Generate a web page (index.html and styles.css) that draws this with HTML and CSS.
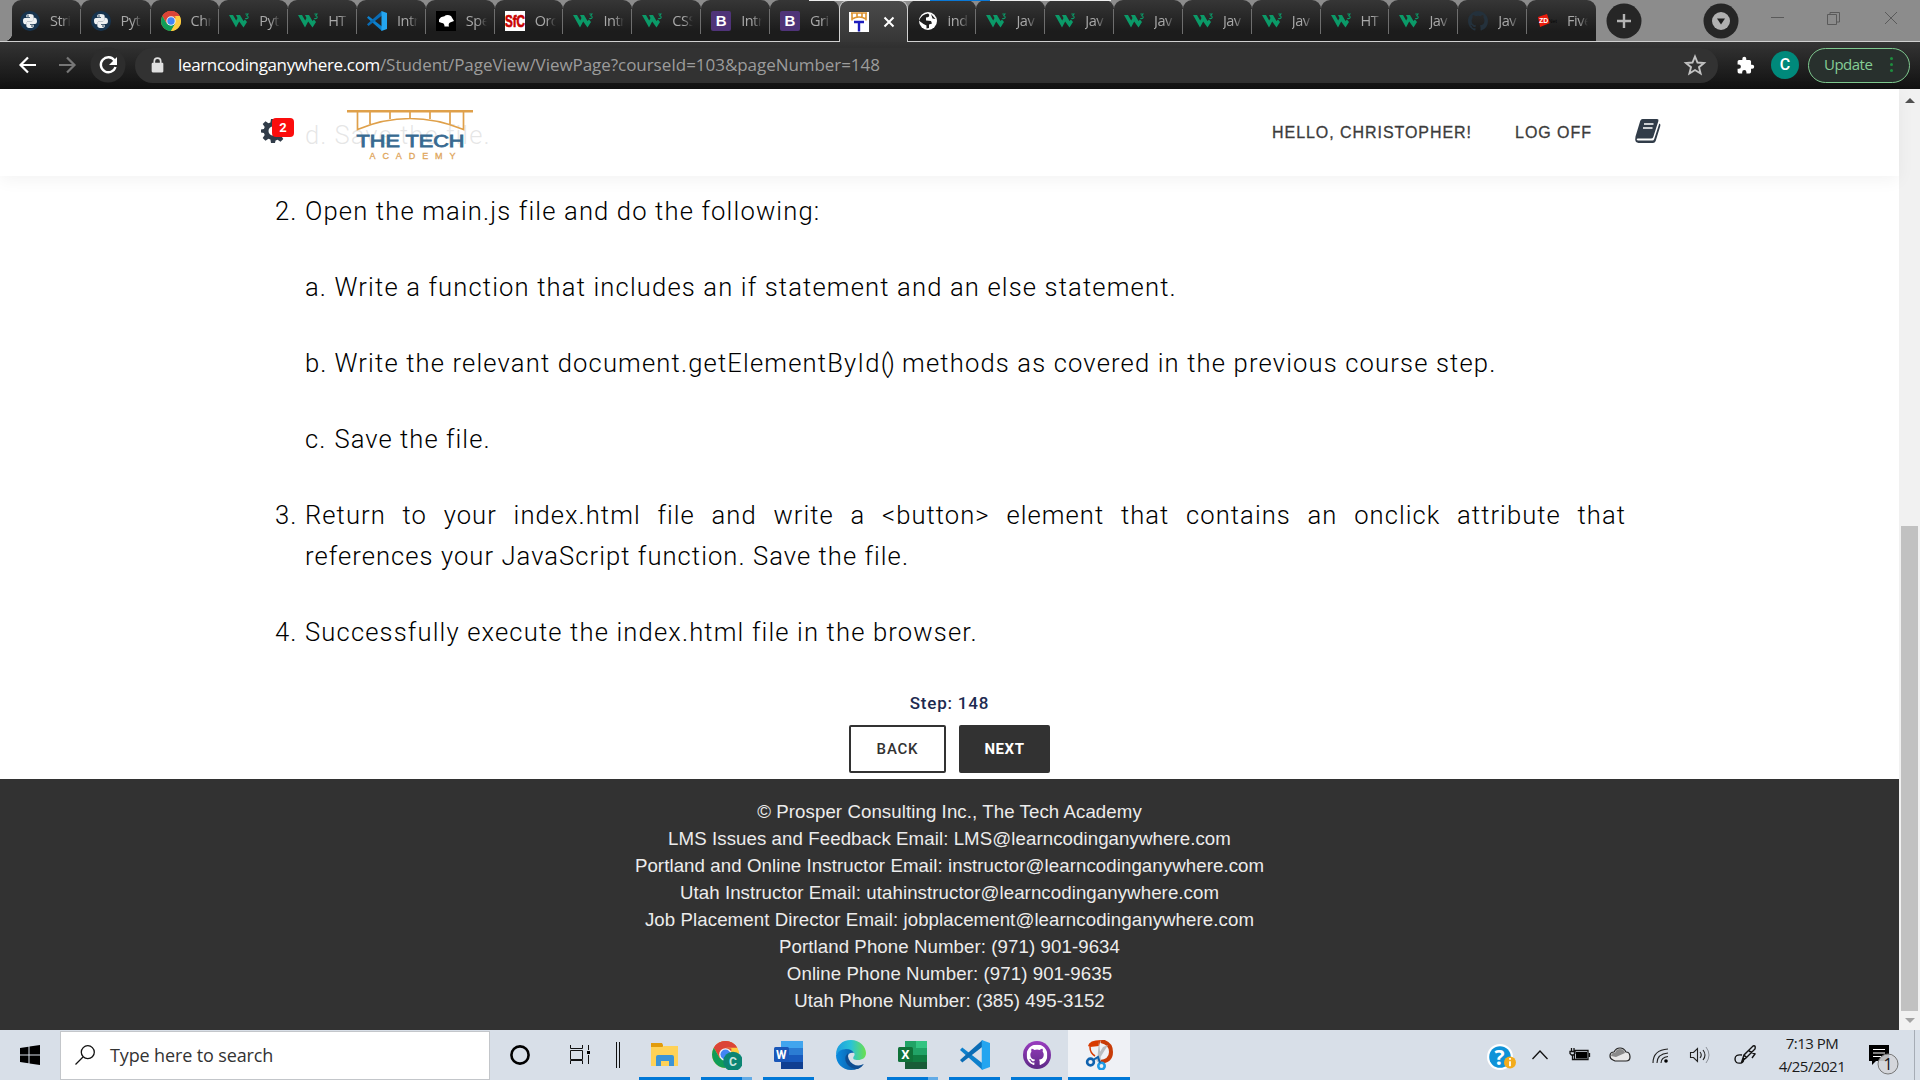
FILE: index.html
```html
<!DOCTYPE html>
<html lang="en">
<head>
<meta charset="utf-8">
<title>The Tech Academy</title>
<link rel="stylesheet" href="styles.css">
</head>
<body>
<svg class="defs" aria-hidden="true">
  <defs>
    <linearGradient id="edgeTop" x1="0" x2="1"><stop offset="0" stop-color="#1c9ce0"/><stop offset=".5" stop-color="#2ac3d6"/><stop offset="1" stop-color="#6be04c"/></linearGradient>
    <linearGradient id="edgeLow" x1="0" x2="1"><stop offset="0" stop-color="#0a8be0"/><stop offset="1" stop-color="#0c4a90"/></linearGradient>
    <linearGradient id="hub" x1="0" x2="0" y1="0" y2="1"><stop offset="0" stop-color="#9a3cc0"/><stop offset="1" stop-color="#5d2a86"/></linearGradient>
  </defs>
  <symbol id="python" viewBox="0 0 20 20"><circle cx="10" cy="10" r="10" fill="#17344f"/><path d="M7 3.500q3-1 5.600 0 1.100.5 1.100 2v3q0 1.500-1.500 1.500H8.500Q6.800 10 6.600 11.500v1.800H5q-2-.3-2-3.500T5.300 7H10v-.7H6.300V4.500q0-.6.7-1z" fill="#eef1f3"/><path d="M13 16.500q-3 1-5.600 0-1.100-.5-1.100-2v-2.800q0-1.500 1.500-1.500h3.700q1.700 0 1.900-1.500V6.800H15q2 .3 2 3.300T14.700 13H10v.7h3.700v1.800q0 .6-.7 1z" fill="#eef1f3"/><circle cx="8" cy="5" r=".8" fill="#17344f"/><circle cx="12" cy="15.100" r=".8" fill="#17344f"/></symbol>
  <symbol id="chrome" viewBox="0 0 20 20"><circle cx="10" cy="10" r="10" fill="#fc3"/><path d="M10 10 1.340 5A10 10 0 0 1 18.660 5z" fill="#db4437"/><path d="M10 5h8.660A10 10 0 0 0 1.340 5L5.700 12.500z" fill="#db4437"/><path d="M1.340 5A10 10 0 0 0 10 20l4.300-7.500H5.700z" fill="#0f9d58"/><path d="M10 20l4.330-7.500V5.500L10 5h8.660A10 10 0 0 1 10 20z" fill="#ffcd40"/><circle cx="10" cy="10" r="4.700" fill="#f5f5f5"/><circle cx="10" cy="10" r="3.700" fill="#4285f4"/></symbol>
  <symbol id="w3" viewBox="0 0 20 20"><path d="M0 4h4l3.200 5.500L8.500 7 7 4h4l3.500 6L16 8.500l2 2.500-3.500 5.500-4.300-6-3.200 6z" fill="#0b9a68"/><path d="M16.300 3h2.700l-1.300 1.700q1.600.2 1.500 1.700-.3 1.600-3 1.100" fill="none" stroke="#0b9a68" stroke-width="1.100"/></symbol>
  <symbol id="vscode" viewBox="0 0 20 20"><path d="M0 6.700 1.500 5 15 15.500V20z" fill="#0d80cc"/><path d="M0 13.300 1.500 15 15 4.500V0z" fill="#0a6cb5"/><path d="M14.500 0 20 2v16l-5.500 2z" fill="#24a5f0"/></symbol>
  <symbol id="spice" viewBox="0 0 20 20"><path fill="#000" d="M0 0h20v20H0z"/><path d="M3 8.500Q5 5 8 5.500q3-2.500 7-.5l3 5-4 1.500q-2 1-1 4H8.500q0-3.500-2.500-3.500L3 11z" fill="#fff"/></symbol>
  <symbol id="tta" viewBox="0 0 20 20"><path fill="#fff" d="M0 0h20v20H0z"/><path d="M2 1h16M3 1v7.500M8 1v4M13 1v4M17 1v7.500M3 7q7-4 14 0" stroke="#dd9330" stroke-width="1.600" fill="none"/><path d="M5 10h10M10 10v9.500" stroke="#1d1dbd" stroke-width="2.400"/></symbol>
  <symbol id="globe" viewBox="0 0 20 20"><circle cx="10" cy="10" r="9" fill="#fff"/><path d="M10 2.500q2 1 1 3-1 1-3 1v3l5 .5 1 2.500-3 1v3.500l-2.500.5v-3l-3-1.500-4.500-3.300Q4 3 10 2.500zM13 3l4.500 5-3-.500z" fill="#1f1f1f"/></symbol>
  <symbol id="octo" viewBox="0 0 16 16"><path d="M8 0C3.580 0 0 3.580 0 8c0 3.540 2.290 6.530 5.470 7.590.4.070.55-.17.55-.38v-1.490c-2.010.37-2.530-.49-2.690-.94-.09-.23-.48-.94-.82-1.130-.28-.15-.68-.52-.01-.53.63-.01 1.080.58 1.230.82.72 1.210 1.870.87 2.330.66.070-.52.28-.87.510-1.070-1.780-.2-3.640-.89-3.640-3.950 0-.87.310-1.590.82-2.150-.08-.2-.36-1.020.08-2.120 0 0 .67-.21 2.200.82a7.600 7.600 0 0 1 4 0c1.530-1.040 2.200-.82 2.200-.82.44 1.100.16 1.920.08 2.120.51.560.82 1.270.82 2.150 0 3.070-1.870 3.750-3.650 3.950.29.25.54.73.54 1.480v2.200c0 .21.150.46.550.38A8 8 0 0 0 16 8c0-4.420-3.580-8-8-8z"/></symbol>
</svg>

<header class="browser">
  <div class="loading"><i></i><i class="blue"></i><i></i></div>
  <div class="strip">
    <div class="tabs">
      <div class="tab"><svg><use href="#python"/></svg><span>Stri</span></div>
      <div class="tab wide"><svg><use href="#python"/></svg><span>Pyt</span></div>
      <div class="tab"><svg><use href="#chrome"/></svg><span>Chr</span></div>
      <div class="tab"><svg><use href="#w3"/></svg><span>Pyt</span></div>
      <div class="tab"><svg><use href="#w3"/></svg><span>HT</span></div>
      <div class="tab"><svg><use href="#vscode"/></svg><span>Intr</span></div>
      <div class="tab"><svg><use href="#spice"/></svg><span>Spe</span></div>
      <div class="tab"><svg viewBox="0 0 20 20"><path fill="#fff" d="M0 0h20v20H0z"/><text class="sfc" x="0" y="16" textLength="20" lengthAdjust="spacingAndGlyphs">SfC</text></svg><span>Orc</span></div>
      <div class="tab"><svg><use href="#w3"/></svg><span>Intr</span></div>
      <div class="tab"><svg><use href="#w3"/></svg><span>CSS</span></div>
      <div class="tab"><b class="boot">B</b><span>Intr</span></div>
      <div class="tab last"><b class="boot">B</b><span>Gri</span></div>
      <div class="tab active"><svg><use href="#tta"/></svg><svg class="x" viewBox="0 0 12 12"><path d="m1.500 1.500 9 9m0-9-9 9"/></svg></div>
      <div class="tab"><svg><use href="#globe"/></svg><span>ind</span></div>
      <div class="tab"><svg><use href="#w3"/></svg><span>Jav</span></div>
      <div class="tab"><svg><use href="#w3"/></svg><span>Jav</span></div>
      <div class="tab"><svg><use href="#w3"/></svg><span>Jav</span></div>
      <div class="tab"><svg><use href="#w3"/></svg><span>Jav</span></div>
      <div class="tab"><svg><use href="#w3"/></svg><span>Jav</span></div>
      <div class="tab"><svg><use href="#w3"/></svg><span>HT</span></div>
      <div class="tab"><svg><use href="#w3"/></svg><span>Jav</span></div>
      <div class="tab"><svg fill="#24313c"><use href="#octo"/></svg><span>Jav</span></div>
      <div class="tab last"><svg viewBox="0 0 20 20"><path d="m1 6 9-3 3 9-10 4z" fill="#ea1c0c"/><text class="zd" x="2" y="11.500">ZD</text><text class="net" x="11.500" y="11.500">Net</text></svg><span>Five</span></div>
    </div>
    <svg class="round plus" viewBox="0 0 36 36"><circle cx="18" cy="18" r="17.500" fill="#262626"/><path d="M18 11v14M11 18h14" stroke="#b4b4b4" stroke-width="2.400"/></svg>
    <svg class="round more" viewBox="0 0 36 36"><circle cx="18" cy="18" r="17.500" fill="#262626"/><circle cx="18" cy="18" r="9" fill="#b0b0b0"/><path d="M14 15.500h8l-4 6z" fill="#1f1f1f"/></svg>
    <svg class="wincontrols" viewBox="0 0 130 20"><path d="M1 8.500h13M57.500 5.500h9v10h-9zM60 5V3.500h9.500V13H67M115 3l12 12m0-12-12 12" fill="none" stroke="#5a5a5a"/></svg>
  </div>
  <div class="toolbar">
    <svg class="navicons" viewBox="0 0 110 36"><circle cx="90" cy="18" r="17.500" fill="#2d2d2d"/><path d="M18 18H3M10 10.500 2.500 18l7.500 7.500" stroke="#fff" stroke-width="2.200" fill="none"/><path d="M41 18h15M49 10.500l7.500 7.500-7.500 7.500" stroke="#777" stroke-width="2.200" fill="none"/><path d="M96.500 13.500A7.500 7.500 0 1 0 97.500 20" stroke="#fff" stroke-width="2.400" fill="none"/><path d="M99 10v8h-8z" fill="#fff"/></svg>
    <div class="omnibox">
      <svg class="lock" viewBox="0 0 12 16"><rect x=".5" y="5.500" width="11" height="9" rx="1" fill="#e0e0e0"/><path d="M3 6V4q0-3 3-3t3 3v2" fill="none" stroke="#e0e0e0" stroke-width="1.600"/></svg>
      <div class="url"><b>learncodinganywhere.com</b>/Student/PageView/ViewPage?courseId=103&amp;pageNumber=148</div>
      <svg class="star" viewBox="0 0 24 24"><path d="m12 3.500 2.500 6 6.500.5-5 4.200 1.600 6.300L12 17l-5.600 3.500L8 14.200 3 10l6.500-.5z" fill="none" stroke="#c2c2c2" stroke-width="1.900"/></svg>
    </div>
    <svg class="puzzle" viewBox="0 0 24 24"><path d="M20.500 11H19V7a2 2 0 0 0-2-2h-4V3.500a2.500 2.500 0 0 0-5 0V5H4a2 2 0 0 0-2 2v3.800h1.500a2.700 2.700 0 0 1 0 5.400H2V20a2 2 0 0 0 2 2h3.800v-1.500a2.700 2.700 0 0 1 5.400 0V22H17a2 2 0 0 0 2-2v-4h1.500a2.500 2.500 0 0 0 0-5z" fill="#fff"/></svg>
    <div class="avatar">C</div>
    <div class="update"><span>Update</span><i></i></div>
  </div>
</header>

<main class="viewport">
  <div class="page">
    <nav class="nav">
      <div class="gear">
        <svg viewBox="0 0 24 24"><path d="M10 0h4l.6 3.400 2 .8 2.900-2 2.800 2.800-2 2.900.8 2 3.400.6v4l-3.400.6-.8 2 2 2.900-2.800 2.800-2.900-2-2 .8L14 24h-4l-.6-3.400-2-.8-2.900 2L1.700 19l2-2.900-.8-2L-.5 13.500v-3L2.900 9.900l.8-2-2-2.900 2.800-2.800 2.900 2 2-.8zm2 7.500a4.500 4.500 0 1 0 0 9 4.500 4.500 0 0 0 0-9z" fill="#313c49" fill-rule="evenodd"/></svg>
        <span class="badge">2</span>
      </div>
      <svg class="logo" viewBox="0 0 126 54"><g fill="none" stroke="#dfa04a"><path d="M0 2.300h126" stroke-width="2.600"/><path d="M10.500 2v18.500q52-22 106 0V2M23 3v12M43 3v7M63 3v6M83 3v7M103 3v12" stroke-width="1.700"/></g><text class="logo-name" x="9.500" y="37.500" textLength="108" lengthAdjust="spacingAndGlyphs">THE TECH</text><text class="logo-sub" x="22.500" y="49.500" textLength="86">ACADEMY</text></svg>
      <span class="link hello">HELLO, CHRISTOPHER!</span>
      <span class="link">LOG OFF</span>
      <svg class="book" viewBox="0 0 26 24"><path d="M7.500 0H22q2 .2 1.400 2L18.300 18q-.6 1.500-2.300 1.500H3q-1.500.2-1.300 1 .3 1 1.500 1H17.500q1.200 0 1.700-1.500L24.300 4.500q1.600.5 1 2.500L20.700 22q-.8 2-2.700 2H3.500Q.3 23.500.2 20.500l.3-3L5.200 2Q6 0 7.500 0z" fill="#313c49"/><path d="M9 5h9.500M8 9h9.500" stroke="#fff" stroke-width="1.600"/></svg>
    </nav>
    <ol class="steps">
      <li class="sub short"><span>d.</span><p>Save the file.</p></li>
      <li><span>2.</span><p>Open the main.js file and do the following:</p></li>
      <li class="sub"><span>a.</span><p>Write a function that includes an if statement and an else statement.</p></li>
      <li class="sub"><span>b.</span><p>Write the relevant document.getElementById<span class="parens">()</span> methods as covered in the previous course step.</p></li>
      <li class="sub short"><span>c.</span><p>Save the file.</p></li>
      <li><span>3.</span><p class="long"><span class="justify">Return to your index.html file and write a &lt;button&gt; element that contains an onclick attribute that</span> references your JavaScript function. Save the file.</p></li>
      <li><span>4.</span><p>Successfully execute the index.html file in the browser.</p></li>
    </ol>
    <div class="pager">
      <div class="step">Step: 148</div>
      <div class="buttons"><button class="back">BACK</button><button class="next">NEXT</button></div>
    </div>
    <footer class="footer">
      <p>© Prosper Consulting Inc., The Tech Academy</p>
      <p>LMS Issues and Feedback Email: LMS@learncodinganywhere.com</p>
      <p>Portland and Online Instructor Email: instructor@learncodinganywhere.com</p>
      <p>Utah Instructor Email: utahinstructor@learncodinganywhere.com</p>
      <p>Job Placement Director Email: jobplacement@learncodinganywhere.com</p>
      <p>Portland Phone Number: (971) 901-9634</p>
      <p>Online Phone Number: (971) 901-9635</p>
      <p>Utah Phone Number: (385) 495-3152</p>
    </footer>
  </div>
  <div class="scrollbar"><i class="up"></i><div class="thumb"></div><i class="down"></i></div>
</main>

<div class="taskbar">
  <div class="start"><svg viewBox="0 0 20 20"><path d="M0 3l8.500-1.200v7.700H0zM9.500 1.600 20 0v9.500H9.500zM0 10.500h8.500v7.700L0 17zM9.500 10.500H20V20L9.500 18.400z"/></svg></div>
  <div class="search"><svg viewBox="0 0 20 20"><circle cx="12.800" cy="7.200" r="6.500" fill="none" stroke="#111" stroke-width="1.300"/><path d="M8 12 .5 19.500" stroke="#111" stroke-width="1.300"/></svg><span>Type here to search</span></div>
  <svg class="sys" viewBox="0 0 144 50"><circle cx="30" cy="25" r="8.600" fill="none" stroke="#000" stroke-width="2.600"/><path d="M80.500 15v3.500h12V15M80.500 20.500h12v9h-12zM80.500 34v-3.500h12V34M98.500 15v5M98.500 25v9M126.500 12v26M129.500 12v26" fill="none" stroke="#111"/><path d="M97 21h3v3h-3z"/></svg>
  <div class="apps">
    <div class="app run"><svg viewBox="0 0 30 30"><path d="M1 3h11l1 2v3H1z" fill="#e29c0c"/><path d="M1 7h11l2-1h14v20H1z" fill="#ffd257"/><path d="M6 26V17q0-2 2-2h14q2 0 2 2v9h-5v-5h-8v5z" fill="#3c94d6"/></svg></div>
    <div class="app run multi"><svg viewBox="0 0 30 30"><svg width="27" height="27" y="1"><use href="#chrome"/></svg><circle cx="21" cy="21.500" r="9.800" fill="#0c8573"/><text x="17" y="26" font-size="12" font-weight="700" fill="#c7e5df" font-family="Roboto, sans-serif">C</text></svg></div>
    <div class="app run"><svg viewBox="0 0 30 30"><path d="M7 1h22v7H7z" fill="#41a5ee"/><path d="M7 8h22v7H7z" fill="#2b7cd3"/><path d="M7 15h22v7H7z" fill="#185abd"/><path d="M7 22h22v7H7z" fill="#103f91"/><rect y="7" width="15" height="15" rx="1.500" fill="#1a57b8"/><text x="2" y="19" font-size="12" font-weight="700" fill="#fff" font-family="Roboto, sans-serif">W</text></svg></div>
    <div class="app"><svg viewBox="0 0 30 30"><path d="M0 15C0 6 6 0 15 0s15 7 15 13c0 5-4 7-8 7s-6-1-4-4c2-2-1-6-6-6Q4 9 0 15z" fill="url(#edgeTop)"/><path d="M0 15q3-6 10-6 6 0 8 4-5-1-6 3-1 8 7 10 4 1 8-2-4 6-12 6C6 30 0 23 0 15z" fill="url(#edgeLow)"/><path d="M12 13q-5 5-1 11 4 5 11 5 4-2 6-5-6 3-11 0-6-4-5-11z" fill="#0d4d92"/></svg></div>
    <div class="app run multi"><svg viewBox="0 0 30 30"><path d="M7 1h11v7H7zM7 8h11v7H7z" fill="#21a366"/><path d="M18 1h11v7H18z" fill="#33c481"/><path d="M18 8h11v7H18z" fill="#21a366"/><path d="M7 15h22v7H7z" fill="#107c41"/><path d="M7 22h22v7H7z" fill="#185c37"/><rect y="7" width="15" height="15" rx="1.500" fill="#107239"/><text x="3.200" y="19" font-size="13" font-weight="700" fill="#fff" font-family="Roboto, sans-serif">X</text></svg></div>
    <div class="app run"><svg><use href="#vscode"/></svg></div>
    <div class="app run"><svg viewBox="0 0 30 30"><circle cx="15" cy="15" r="14" fill="url(#hub)"/><svg class="cat" x="4.500" y="4.500" width="21" height="21" fill="#fff"><use href="#octo"/></svg></svg></div>
    <div class="app run current"><svg viewBox="0 0 30 30"><path d="M4 6q1-6 13-6l-2 6-9 1z" fill="#d83b01"/><path d="M17 1q10 2 10 11t-11 10" fill="none" stroke="#c83c08" stroke-width="4"/><path d="M6 7q0 6 5 9" stroke="#d83b01" stroke-width="1.500" fill="none"/><path d="M15 1 17 21l-4 1zM24 5 14 21l-3-1 8-13z" fill="#b9bcc0"/><circle cx="6.500" cy="22" r="3.400" fill="none" stroke="#0f62ae" stroke-width="2.600"/><circle cx="17.500" cy="26" r="3.200" fill="none" stroke="#219be5" stroke-width="2.600"/><path d="m9 20 5-3 2 6" fill="none" stroke="#0f62ae" stroke-width="2"/></svg></div>
  </div>
  <svg class="tray" viewBox="0 0 280 50"><circle cx="15" cy="27" r="13" fill="#fff"/><circle cx="15" cy="27" r="10.800" fill="#0f93d8"/><text x="9.500" y="34.500" font-size="21" font-weight="700" fill="#fff" font-family="Open Sans, sans-serif">?</text><circle cx="25" cy="32.500" r="6" fill="#f3ac1c"/><path d="M25 28v1.800M25 31.300v5" stroke="#fff" stroke-width="1.800"/>
    <g fill="none" stroke="#111" stroke-width="1.300"><path d="m47.500 29 7.500-8 7.500 8"/><path d="M89.500 20.500h13.500v9H89.500zM104.500 23v4M86.500 18v3M89 18v3M85 21.500h5v2l-1.500 1.500h-2L85 23.500zM87.500 25v4.500h2"/></g><path d="M91 22h11v6.500H91z"/>
    <path d="M128 30q-3-1-3-4 0-4 4-4 2-4 6-4t6 4q4 0 4 5 0 4-4 4h-11z" fill="#e8e8e8" stroke="#222" stroke-width="1.200"/><path d="M126 26q1-4 4-3 1-4 5-4t5 4l-9 4z" fill="#8a8a8a"/>
    <g fill="none" stroke="#222" stroke-width="1.100"><path d="M168 33q0-13 15-14M172 33q0-9 11-10M176 33q0-5.500 7-6.500"/><path d="M205.500 22.500h3l4-4v13l-4-4h-3zM215 22q2.500 3 0 6M218 20q4 5 0 10"/></g><path d="M221 17q6 8 0 16" fill="none" stroke="#8c9199"/><circle cx="181" cy="31" r="1.800"/>
    <path d="m257 31 2-6 9-9q3-1 2 3l-9 9zM259 25l3 3M257 25q-7-1-7 4t6 4q3-1 3-5M264 21l6 3-3 4" fill="none" stroke="#111" stroke-width="1.400"/></svg>
  <div class="clock"><span>7:13 PM</span><span>4/25/2021</span></div>
  <svg class="notif" viewBox="0 0 34 34"><path d="M1 1h20v16H8l-4 4v-4H1z"/><path d="M5 5.500h12M5 9h12M5 12.500h9" stroke="#fff"/><circle cx="20" cy="20" r="10" fill="#d3d5d8" fill-opacity=".88" stroke="#777"/><text x="15.500" y="26" font-size="16" fill="#111" font-family="Open Sans, sans-serif">1</text></svg>
  <i class="peek"></i>
</div>
</body>
</html>
```
FILE: styles.css
```css
* { box-sizing: border-box; }
body { margin: 0; width: 1920px; height: 1080px; overflow: hidden; display: flex; flex-direction: column; background: #fff; font-family: "Liberation Sans", sans-serif; }
p, ol { margin: 0; padding: 0; }
svg { display: block; flex: none; }
.defs { position: absolute; width: 0; height: 0; }

/* browser chrome */
.browser { flex: none; height: 89px; position: relative; font-family: "Open Sans", "Noto Sans", sans-serif; }
.loading { position: absolute; top: 0; left: 809px; display: flex; z-index: 3; }
.loading i { width: 121px; height: 1px; background: #eee; }
.loading i.blue { width: 60px; background: #0a78d6; }
.strip { height: 42px; background: #8c8c8c; border-bottom: 1px solid #d0d0d0; display: flex; align-items: flex-start; padding-left: 11.5px; }
.tabs { display: flex; height: 41px; }
.tab { width: 68.83px; height: 41px; padding: 0 0 0 10px; display: flex; align-items: center; gap: 10px; background: linear-gradient(#363636, #1c1c1c 75%); border-radius: 9px 9px 0 0; position: relative; }
.tab:first-child { width: 69px; padding-left: 8.500px; }
.tab:first-child::before { content: ""; position: absolute; left: -8px; bottom: 0; width: 8px; height: 8px; background: radial-gradient(circle at 0 0, transparent 8px, #1c1c1c 8.500px); }
.tab.wide { width: 70px; }
.tab::after { content: ""; position: absolute; right: 0; top: 9px; width: 1px; height: 25px; background: #6e6e6e; }
.tab.last::after, .tab.active::after { display: none; }
.tab svg { width: 20px; height: 20px; }
.tab span { width: 21px; overflow: hidden; white-space: nowrap; font-size: 14.500px; letter-spacing: -.5px; color: #a8a8a8; -webkit-mask: linear-gradient(90deg, #000 55%, transparent); mask: linear-gradient(90deg, #000 55%, transparent); }
.tab.active { height: 42px; padding-left: 9px; background: linear-gradient(#4a4a4a, #363636); border: 1px solid #d0d0d0; border-bottom: 0; gap: 14px; z-index: 2; }
.tab.active .x { width: 12px; height: 12px; stroke: #fff; stroke-width: 2; }
.boot { flex: none; width: 20px; height: 20px; border-radius: 2px; background: #4f3378; color: #fff; font: 700 15px/20px "Liberation Sans", sans-serif; text-align: center; }
.sfc { font: 700 17px "Liberation Sans", sans-serif; fill: #c80000; stroke: #c80000; stroke-width: .7px; }
.zd { font: 700 7px "Liberation Sans", sans-serif; fill: #fff; }
.net { font: 5.500px "Liberation Sans", sans-serif; fill: #090909; }
.round { width: 36px; height: 36px; margin-top: 3px; }
.plus { margin-left: 10px; }
.more { margin-left: 61px; }
.wincontrols { width: 130px; height: 20px; margin: 9px 0 0 31px; }
.toolbar { height: 47px; background: linear-gradient(#343434, #111); display: flex; align-items: center; }
.navicons { width: 110px; height: 36px; margin: 0 0 1px 18px; }
.omnibox { width: 1583px; height: 35px; margin: 0 0 1px 7px; border-radius: 18px; background: #323232; display: flex; align-items: center; padding: 0 11px 0 16px; }
.lock { width: 13px; height: 17px; }
.url { flex: 1; margin-left: 14px; padding-bottom: 1px; font-size: 17px; letter-spacing: -.05px; color: #9c9c9c; white-space: nowrap; }
.url b { font-weight: 400; letter-spacing: -.35px; color: #fff; }
.star { width: 24px; height: 24px; }
.puzzle { width: 19px; height: 19px; margin: 0 0 1px 18px; }
.avatar { width: 28px; height: 28px; margin: 0 0 1px 16px; border-radius: 50%; background: #00897b; color: #fff; font: 500 16px/28px Roboto, sans-serif; text-align: center; }
.update { width: 102px; height: 35px; margin: 0 0 1px 9px; border: 1.500px solid #7fc98f; border-radius: 18px; background: #28302d; color: #85cd95; display: flex; align-items: center; justify-content: space-between; padding: 0 16px 2px 15px; font-size: 15px; letter-spacing: -.5px; }
.update i { width: 3px; height: 3px; border-radius: 50%; background: #1e8e3e; box-shadow: 0 -6px #1e8e3e, 0 6px #1e8e3e; }

/* page */
.viewport { flex: none; height: 941px; display: flex; }
.page { width: 1899px; position: relative; display: flex; flex-direction: column; }
.nav { position: absolute; inset: 0 0 auto; height: 87px; padding-left: 261px; display: flex; align-items: center; background: rgba(255, 255, 255, .9); box-shadow: 0 4px 16px rgba(0, 0, 0, .05); z-index: 2; }
.gear { position: relative; width: 24px; height: 24px; margin-bottom: 3px; }
.gear svg { width: 24px; height: 24px; }
.badge { position: absolute; left: 11px; top: -1px; width: 22px; height: 19px; border-radius: 4px; background: #fb0d0d; color: #fff; font: 700 13px/19px Roboto, sans-serif; text-align: center; }
.logo { width: 126px; height: 54px; margin: 7px 0 0 62px; }
.logo-name { font: 16.500px "Liberation Sans", sans-serif; fill: #386a91; stroke: #386a91; stroke-width: .8px; }
.logo-sub { font: 9px "Liberation Sans", sans-serif; fill: #e0a65c; stroke: #e0a65c; stroke-width: .3px; }
.link { font-size: 16px; letter-spacing: .95px; color: #3c3c3c; -webkit-text-stroke: .3px #3c3c3c; }
.hello { margin: 0 43px 0 799px; }
.book { width: 26px; height: 24px; margin: 0 0 3px 43px; }
.steps { list-style: none; width: 1350px; margin: 26px 0 0 275px; display: flex; flex-direction: column; gap: 35px; font: 300 25.600px/41px Roboto, sans-serif; letter-spacing: 1.15px; color: #000; }
.steps li { display: grid; grid-template-columns: 30px 1fr; }
.steps .sub { margin-left: 30px; }
.steps .sub p { margin-left: -.5px; }
.steps .long { letter-spacing: 1.05px; }
.steps .short { letter-spacing: 1.05px; }
.steps p { white-space: nowrap; }
.parens { letter-spacing: -2.500px; margin-right: 2.500px; }
.justify { display: block; white-space: normal; text-align-last: justify; margin-right: -1px; }
.pager { display: flex; flex-direction: column; align-items: center; margin-top: 38px; font-family: Roboto, sans-serif; }
.step { height: 24px; font-size: 17px; line-height: 24px; letter-spacing: .8px; color: #1d2a50; font-weight: 500; }
.buttons { display: flex; gap: 13px; margin-top: 10px; }
.buttons button { height: 48px; border: 2px solid #323232; border-radius: 2px; background: #fff; color: #323232; font: 500 15px Roboto, sans-serif; letter-spacing: .8px; padding: 0; }
.buttons .back { width: 97px; }
.buttons .next { width: 91px; background: #323232; color: #fff; font-weight: 700; letter-spacing: .6px; }
.footer { flex: 1; margin-top: 6px; padding-top: 19px; background: #323232; color: #ececec; font-size: 18.670px; letter-spacing: .08px; line-height: 27px; text-align: center; }
.scrollbar { width: 21px; background: #f1f1f1; display: flex; flex-direction: column; align-items: center; padding: 9px 0 7px; }
.scrollbar i { border: 5px solid transparent; }
.up { border-top: 0 !important; border-bottom-color: #505050 !important; }
.down { border-bottom: 0 !important; border-top-color: #a3a3a3 !important; margin-top: auto; }
.thumb { width: 17px; height: 485px; margin-top: 423px; background: #c1c1c1; }

/* taskbar */
.taskbar { flex: none; height: 50px; display: flex; background: #d8dfe8; font-family: "Open Sans", "Noto Sans", sans-serif; }
.start { width: 60px; padding: 15px 20px; }
.start svg { width: 20px; height: 20px; }
.search { width: 430px; height: 49px; margin-top: 1px; background: #fff; border: 1px solid #c3c6ca; display: flex; align-items: center; gap: 15px; padding: 0 14px 1px; font-size: 18px; letter-spacing: -.13px; color: #333; }
.search svg { width: 20px; height: 20px; }
.sys { width: 144px; height: 50px; }
.apps { display: flex; }
.app { width: 62px; height: 50px; display: flex; align-items: center; justify-content: center; position: relative; padding-right: 1px; }
.app svg { width: 30px; height: 30px; }
.app svg svg { width: 27px; height: 27px; }
.app svg .cat { width: 21px; height: 21px; }
.run::after { content: ""; position: absolute; left: 5px; right: 6px; bottom: 0; height: 3px; background: #0078d7; }
.multi::after { background: linear-gradient(90deg, #0078d7 80%, #62abe6 80%); }
.current { background: #eff1f5; }
.current::after { left: 0; right: 0; }
.tray { width: 280px; height: 50px; margin-left: 355px; }
.clock { width: 94px; display: flex; flex-direction: column; align-items: center; font-size: 15px; letter-spacing: -.5px; line-height: 22.500px; padding-top: 2px; color: #1a1a1a; }
.notif { width: 34px; height: 34px; margin: 14px 0 0 9px; }
.peek { width: 1px; background: #a6acb5; margin-left: 12px; }
```
